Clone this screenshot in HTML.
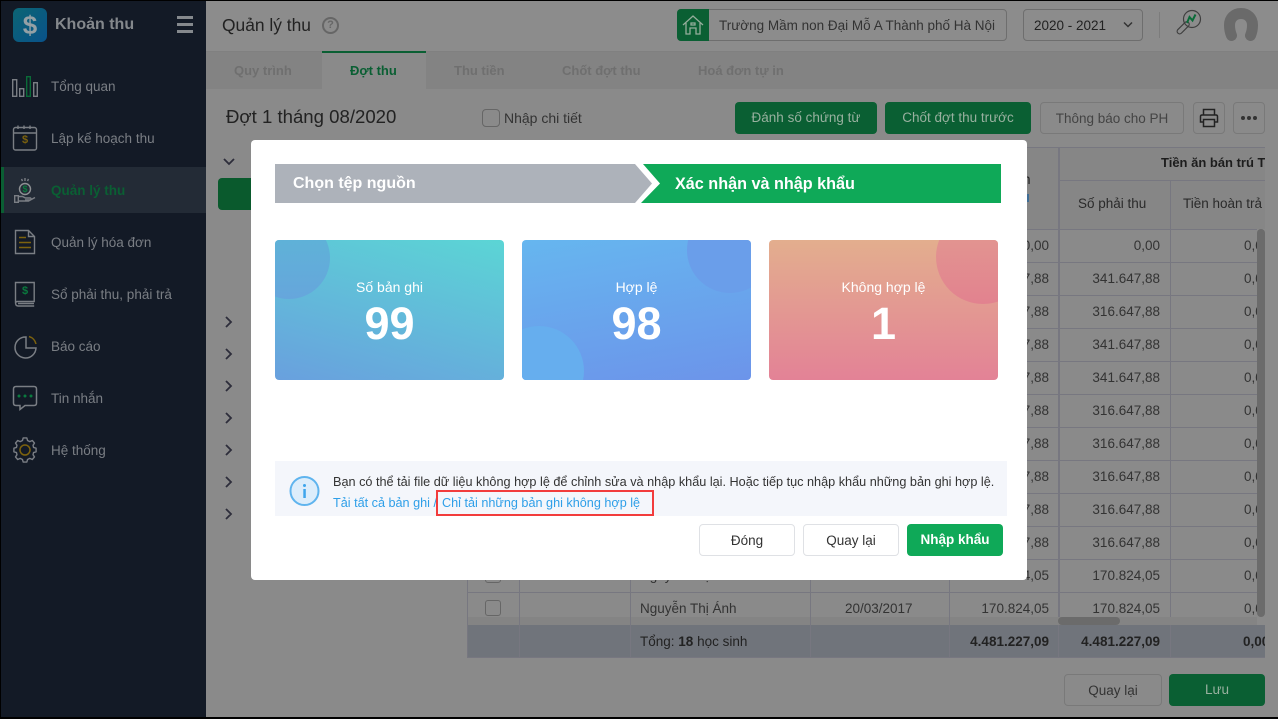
<!DOCTYPE html>
<html lang="vi"><head><meta charset="utf-8"><title>Khoản thu</title>
<style>
*{box-sizing:border-box}
html,body{margin:0;padding:0}
body{width:1278px;height:719px;overflow:hidden;position:relative;background:#8a8a8a;font-family:"Liberation Sans","DejaVu Sans",sans-serif;font-size:13.5px;color:#2a2a2a}
.a{position:absolute}
.t{position:absolute;white-space:nowrap;line-height:20px}
.nav{color:#7a7e84;font-size:13.5px;left:51px}
.tab{color:#6f6f6f;font-weight:bold;font-size:13px;top:61px}
.cell{color:#333;width:100px;text-align:right}
.z{left:1244px;width:13px;overflow:hidden;color:#333}
.hl{position:absolute;background:#777780;height:1px}
.vl{position:absolute;background:#777780;width:1px}
.btn{position:absolute;border-radius:4px;text-align:center;line-height:32px;white-space:nowrap}
.bd{line-height:31px}
.card{position:absolute;top:240px;width:229px;height:140px;border-radius:4px;overflow:hidden;color:#fff;text-align:center}
.card i{position:absolute;border-radius:50%;display:block}
.card b{position:absolute;left:0;right:0;top:57px;font-size:45px;line-height:54px}
.card span{position:absolute;left:0;right:0;top:37px;font-size:14px;line-height:20px}
</style></head><body>

<!-- sidebar -->
<div class="a" style="left:0;top:0;width:206px;height:719px;background:#131a26;border-left:1px solid #000"></div>
<div class="a" style="left:13px;top:8px;width:34px;height:34px;border-radius:6px;background:linear-gradient(135deg,#0c6573,#09528a)"></div>
<div class="t" style="left:13px;top:8px;width:34px;line-height:34px;text-align:center;font-size:26px;color:#94a0a5;font-weight:bold">$</div>
<div class="t" style="left:55px;top:15px;font-size:16px;font-weight:bold;color:#84888c">Khoản thu</div>
<div class="a" style="left:177px;top:16px;width:16px;height:2.5px;background:#85898d"></div>
<div class="a" style="left:177px;top:23px;width:16px;height:2.5px;background:#85898d"></div>
<div class="a" style="left:177px;top:30px;width:16px;height:2.5px;background:#85898d"></div>
<div class="a" style="left:1px;top:167px;width:205px;height:46px;background:#232b36;border-left:3px solid #0a5f33"></div>

<svg class="a" style="left:0;top:60px" width="206" height="420" fill="none" stroke="#7a7e84" stroke-width="1.400">
<!-- tong quan -->
<rect x="12.700" y="19.700" width="4" height="16.600"/><rect x="19.700" y="28.700" width="4" height="7.600"/><rect x="26.700" y="16.700" width="3.600" height="19.600" stroke="#0a6b38"/><rect x="33.700" y="22.700" width="3.600" height="13.600"/>
<!-- ke hoach -->
<rect x="13.500" y="67.500" width="23" height="22.500" rx="2"/>
<path d="M13 73h24M18 65.500v3.500M24 65.500v3.500M30 65.500v3.500"/>
<!-- hand -->
<circle cx="25" cy="129" r="5.500" stroke="#8d9093"/><path d="M25 118v3M21.500 119l1 2M28.500 119l-1 2"/>
<rect x="14.700" y="135.700" width="3.600" height="6.600"/><path d="M18.500 136.500h4l3 1.500h5q1.500 1-.5 2h-5M18.500 141h10l6.500-3.500"/>
<!-- hoa don -->
<path d="M15.500 170.500h13l6 6v17h-19zM28.500 170.500v6h6"/>
<path d="M19 177.500h7M19 182.500h12M19 187.500h12" stroke="#7c620e" stroke-width="1.600"/>
<!-- so -->
<path d="M15.700 222.500h18.500v19H17.500q-2 0-2 2v-21zM15.700 243.500q0 2.500 2.500 2.500h16M18 243.500h16"/>
<!-- bao cao -->
<path d="M26 277a10.500 10.500 0 1 0 10 11h-10z" stroke-width="1.500"/>
<path d="M29 276.500a10 10 0 0 1 7 7.500" stroke="#7c620e" stroke-width="1.500"/>
<!-- tin nhan -->
<path d="M16 326.500h18q2.500 0 2.500 2.500v14q0 2.500-2.500 2.500H25l-5 4v-4h-4q-2.500 0-2.500-2.500v-14q0-2.500 2.500-2.500z" stroke-width="1.500"/>
<!-- he thong -->
<path d="M22 378.500h5l1 3.500 3 1.500 3.500-1.500 3 3.500-2 3 .7 3 3.500 1v5l-3.500 1-.7 3 2 3-3 3.500-3.500-1.500-3 1.500-1 3.500h-5l-1-3.500-3-1.500-3.500 1.500-3-3.500 2-3-.7-3-3.500-1v-5l3.500-1 .7-3-2-3 3-3.500 3.500 1.500 3-1.500z" stroke-width="1.900" stroke-linejoin="round" transform="translate(25 390) scale(.73) translate(-24.500 -395)"/>
<circle cx="25" cy="390" r="5" stroke="#7c620e" stroke-width="1.500"/>
<circle cx="19" cy="336" r="1.500" fill="#0a7a3e" stroke="none"/><circle cx="25" cy="336" r="1.500" fill="#0a7a3e" stroke="none"/><circle cx="31" cy="336" r="1.500" fill="#0a7a3e" stroke="none"/>
</svg>
<div class="t" style="left:15px;top:130px;width:20px;text-align:center;font-size:11px;font-weight:bold;color:#7c620e">$</div>
<div class="t" style="left:15px;top:281px;width:20px;text-align:center;font-size:11px;font-weight:bold;color:#0a7a3e">$</div>
<div class="t" style="left:15px;top:179px;width:20px;text-align:center;font-size:9px;font-weight:bold;color:#0a7a3e">$</div>

<div class="t nav" style="top:77px">Tổng quan</div>
<div class="t nav" style="top:129px">Lập kế hoạch thu</div>
<div class="t nav" style="top:181px;color:#0a5f33;font-weight:bold">Quản lý thu</div>
<div class="t nav" style="top:233px">Quản lý hóa đơn</div>
<div class="t nav" style="top:285px">Sổ phải thu, phải trả</div>
<div class="t nav" style="top:337px">Báo cáo</div>
<div class="t nav" style="top:389px">Tin nhắn</div>
<div class="t nav" style="top:441px">Hệ thống</div>

<!-- header -->
<div class="a" style="left:206px;top:0;width:1072px;height:52px;background:#8c8c8c;border-bottom:1px solid #808080"></div>
<div class="a" style="left:0;top:0;width:1278px;height:1px;background:#000"></div>
<div class="t" style="left:222px;top:15px;font-size:17.400px;color:#222">Quản lý thu</div>
<div class="a" style="left:322px;top:17px;width:17px;height:17px;border:2px solid #666;border-radius:50%;color:#666;font-size:11px;font-weight:bold;text-align:center;line-height:13px">?</div>

<div class="a" style="left:677px;top:9px;width:330px;height:32px;border:1px solid #6e6e6e;border-radius:4px"></div>
<div class="a" style="left:677px;top:9px;width:32px;height:32px;background:#0a5f33;border-radius:4px 0 0 4px"></div>
<svg class="a" style="left:681px;top:14px" width="24" height="22" fill="none" stroke="#94ad9b" stroke-width="1.300"><path d="M2 11 12 2l10 9M5 9v11h4v-6h6v6h4V9M10 9h4v2h-4z"/></svg>
<div class="t" style="left:719px;top:16px;font-size:13.500px;color:#333">Trường Mầm non Đại Mỗ A Thành phố Hà Nội</div>
<div class="a" style="left:1023px;top:9px;width:120px;height:32px;border:1px solid #6e6e6e;border-radius:4px"></div>
<div class="t" style="left:1034px;top:16px;font-size:13.500px;color:#222">2020 - 2021</div>
<svg class="a" style="left:1122px;top:21px" width="12" height="8" fill="none" stroke="#333" stroke-width="1.500"><path d="M2 1.500 6 5.500 10 1.500"/></svg>
<div class="a" style="left:1159px;top:12px;width:1px;height:26px;background:#7c7c7c"></div>
<svg class="a" style="left:1172px;top:8px" width="30" height="30" fill="none" stroke="#3f3f3f" stroke-width="1.200"><circle cx="20" cy="11" r="8.500"/><rect x="-3" y="-2.500" width="15" height="5" rx="2.500" transform="translate(8 23) rotate(-45)"/><path d="M15 15l2.500-6 3 3.500 3-6" stroke="#0a6b38" stroke-width="2"/></svg>
<svg class="a" style="left:1223px;top:8px" width="36" height="36" fill="none" stroke="#6a6a6a" stroke-width="11" stroke-linecap="round"><path d="M8.500 27.500C7 24 6.500 21 6.500 17 6.500 10 11.500 5.500 18 5.500S29.500 10 29.500 17C29.500 21 29 24 27.500 27.500"/></svg>

<!-- tabs -->
<div class="a" style="left:206px;top:52px;width:1072px;height:37px;background:#838383"></div>
<div class="a" style="left:322px;top:51px;width:104px;height:38px;background:#8a8a8a;border-top:2px solid #0a5f33"></div>
<div class="t tab" style="left:234px">Quy trình</div>
<div class="t tab" style="left:350px;color:#0a5f33">Đợt thu</div>
<div class="t tab" style="left:454px">Thu tiền</div>
<div class="t tab" style="left:562px">Chốt đợt thu</div>
<div class="t tab" style="left:698px">Hoá đơn tự in</div>

<!-- sub header -->
<div class="t" style="left:226px;top:107px;font-size:18.600px;color:#222">Đợt 1 tháng 08/2020</div>
<div class="a" style="left:482px;top:109px;width:18px;height:18px;border:1px solid #666;border-radius:4px"></div>
<div class="t" style="left:504px;top:108px;font-size:14px;color:#333">Nhập chi tiết</div>
<div class="btn" style="left:735px;top:102px;width:142px;height:32px;background:#0a5f33;color:#98b09f">Đánh số chứng từ</div>
<div class="btn" style="left:885px;top:102px;width:146px;height:32px;background:#0a5f33;color:#98b09f">Chốt đợt thu trước</div>
<div class="btn bd" style="left:1040px;top:102px;width:144px;height:32px;border:1px solid #797979;color:#444">Thông báo cho PH</div>
<div class="a" style="left:1193px;top:102px;width:32px;height:32px;border:1px solid #797979;border-radius:4px"></div>
<svg class="a" style="left:1199px;top:108px" width="20" height="20" fill="none" stroke="#222" stroke-width="1.500"><path d="M4.500 7V1.500h11V7M4.500 14H1.500V8.500q0-1.500 1.500-1.500h14q1.500 0 1.500 1.500V14h-3"/><rect x="4.500" y="11.500" width="11" height="7"/></svg>
<div class="a" style="left:1233px;top:102px;width:32px;height:32px;border:1px solid #797979;border-radius:4px"></div>
<div class="a" style="left:1241px;top:116px;width:4px;height:4px;background:#333;border-radius:50%"></div>
<div class="a" style="left:1247px;top:116px;width:4px;height:4px;background:#333;border-radius:50%"></div>
<div class="a" style="left:1253px;top:116px;width:4px;height:4px;background:#333;border-radius:50%"></div>

<!-- tree -->
<div class="a" style="left:218px;top:178px;width:40px;height:32px;background:#0a5a2d;border-radius:4px"></div>
<svg class="a" style="left:222px;top:155px" width="14" height="370" fill="none" stroke="#2d2d3a" stroke-width="1.800">
<path d="M2 4l5 5 5-5"/>
<path d="M4 162l5 5-5 5M4 194l5 5-5 5M4 226l5 5-5 5M4 258l5 5-5 5M4 290l5 5-5 5M4 322l5 5-5 5M4 354l5 5-5 5"/>
</svg>

<!-- table -->
<div class="a" style="left:467px;top:147px;width:798px;height:82px;background:#868686"></div>
<div class="a" style="left:467px;top:625px;width:798px;height:32px;background:#70747b"></div>
<div class="a" style="left:467px;top:617px;width:790px;height:8px;background:#848484"></div>
<div class="a" style="left:1058px;top:617px;width:62px;height:8px;background:#6b6b6b;border-radius:4px"></div>

<div class="hl" style="left:467px;top:147px;width:798px"></div>
<div class="hl" style="left:1058px;top:180px;width:207px"></div>
<div class="hl" style="left:467px;top:229px;width:790px"></div>
<div class="hl" style="left:467px;top:262px;width:790px"></div>
<div class="hl" style="left:467px;top:295px;width:790px"></div>
<div class="hl" style="left:467px;top:328px;width:790px"></div>
<div class="hl" style="left:467px;top:361px;width:790px"></div>
<div class="hl" style="left:467px;top:394px;width:790px"></div>
<div class="hl" style="left:467px;top:427px;width:790px"></div>
<div class="hl" style="left:467px;top:460px;width:790px"></div>
<div class="hl" style="left:467px;top:493px;width:790px"></div>
<div class="hl" style="left:467px;top:526px;width:790px"></div>
<div class="hl" style="left:467px;top:559px;width:790px"></div>
<div class="hl" style="left:467px;top:592px;width:790px"></div>
<div class="hl" style="left:467px;top:657px;width:798px"></div>
<div class="vl" style="left:467px;top:559px;height:98px"></div>
<div class="vl" style="left:519px;top:559px;height:98px"></div>
<div class="vl" style="left:630px;top:559px;height:98px"></div>
<div class="vl" style="left:810px;top:559px;height:98px"></div>
<div class="vl" style="left:949px;top:559px;height:98px"></div>
<div class="vl" style="left:1058px;top:147px;height:470px;width:2px"></div>
<div class="vl" style="left:1170px;top:180px;height:437px"></div>
<div class="vl" style="left:1058px;top:625px;height:32px"></div>
<div class="vl" style="left:1170px;top:625px;height:32px"></div>
<div class="a" style="left:1265px;top:147px;width:13px;height:520px;background:#8a8a8a"></div>

<div class="t" style="left:1161px;top:153px;width:104px;overflow:hidden;font-size:13px;font-weight:bold;color:#1d1d1d">Tiền ăn bán trú Tháng</div>
<div class="t" style="left:1078px;top:194px;color:#2a2a2a">Số phải thu</div>
<div class="t" style="left:1183px;top:194px;width:82px;overflow:hidden;color:#2a2a2a">Tiền hoàn trả</div>
<div class="t" style="left:1023px;top:170px;color:#222">n</div>
<div class="a" style="left:1027px;top:194px;width:2px;height:8px;background:#3f6d95"></div>

<div class="t cell" style="left:949px;top:236px">0,00</div><div class="t cell" style="left:1060px;top:236px">0,00</div><div class="t z" style="top:236px">0,00</div>
<div class="t cell" style="left:949px;top:269px">341.647,88</div><div class="t cell" style="left:1060px;top:269px">341.647,88</div><div class="t z" style="top:269px">0,00</div>
<div class="t cell" style="left:949px;top:302px">316.647,88</div><div class="t cell" style="left:1060px;top:302px">316.647,88</div><div class="t z" style="top:302px">0,00</div>
<div class="t cell" style="left:949px;top:335px">341.647,88</div><div class="t cell" style="left:1060px;top:335px">341.647,88</div><div class="t z" style="top:335px">0,00</div>
<div class="t cell" style="left:949px;top:368px">341.647,88</div><div class="t cell" style="left:1060px;top:368px">341.647,88</div><div class="t z" style="top:368px">0,00</div>
<div class="t cell" style="left:949px;top:401px">316.647,88</div><div class="t cell" style="left:1060px;top:401px">316.647,88</div><div class="t z" style="top:401px">0,00</div>
<div class="t cell" style="left:949px;top:434px">316.647,88</div><div class="t cell" style="left:1060px;top:434px">316.647,88</div><div class="t z" style="top:434px">0,00</div>
<div class="t cell" style="left:949px;top:467px">316.647,88</div><div class="t cell" style="left:1060px;top:467px">316.647,88</div><div class="t z" style="top:467px">0,00</div>
<div class="t cell" style="left:949px;top:500px">316.647,88</div><div class="t cell" style="left:1060px;top:500px">316.647,88</div><div class="t z" style="top:500px">0,00</div>
<div class="t cell" style="left:949px;top:533px">316.647,88</div><div class="t cell" style="left:1060px;top:533px">316.647,88</div><div class="t z" style="top:533px">0,00</div>
<div class="t cell" style="left:949px;top:566px">170.824,05</div><div class="t cell" style="left:1060px;top:566px">170.824,05</div><div class="t z" style="top:566px">0,00</div>
<div class="t cell" style="left:949px;top:599px">170.824,05</div><div class="t cell" style="left:1060px;top:599px">170.824,05</div><div class="t z" style="top:599px">0,00</div>
<div class="a" style="left:1257px;top:229px;width:8px;height:388px;background:#6b6b6b;border-radius:4px"></div>

<div class="a" style="left:485px;top:567px;width:16px;height:16px;border:1px solid #666;border-radius:3px"></div>
<div class="a" style="left:485px;top:600px;width:16px;height:16px;border:1px solid #666;border-radius:3px"></div>
<div class="t" style="left:640px;top:566px;color:#333">Nguyễn Thị Ánh</div>
<div class="t" style="left:640px;top:599px;color:#333">Nguyễn Thị Ánh</div>
<div class="t" style="left:845px;top:599px;color:#333">20/03/2017</div>
<div class="t" style="left:640px;top:632px;color:#222">Tổng: <b>18</b> học sinh</div>
<div class="t cell" style="left:949px;top:632px;font-weight:bold;color:#222">4.481.227,09</div>
<div class="t cell" style="left:1060px;top:632px;font-weight:bold;color:#222">4.481.227,09</div>
<div class="t" style="left:1243px;top:632px;width:22px;overflow:hidden;font-weight:bold;color:#222">0,00</div>

<div class="btn bd" style="left:1064px;top:674px;width:98px;height:32px;border:1px solid #797979;color:#333">Quay lại</div>
<div class="btn" style="left:1169px;top:674px;width:96px;height:32px;background:#0a5f33;color:#98b09f">Lưu</div>

<!-- modal -->
<div class="a" style="left:251px;top:140px;width:776px;height:440px;background:#fff;border-radius:4px"></div>
<svg class="a" style="left:275px;top:164px" width="730" height="39"><polygon points="0,0 360,0 377,19.500 360,39 0,39" fill="#adb2ba"/><polygon points="368,0 726,0 726,39 366,39 385,19.500" fill="#0fa958"/></svg>
<div class="t" style="left:293px;top:174px;font-size:16px;font-weight:bold;color:#fff">Chọn tệp nguồn</div>
<div class="t" style="left:675px;top:174px;font-size:16.200px;font-weight:bold;color:#fff">Xác nhận và nhập khẩu</div>

<div class="card" style="left:275px;background:linear-gradient(195deg,#5bd5d5,#69a0de)">
<i style="left:-27px;top:-23px;width:82px;height:82px;background:linear-gradient(180deg,#5cb6d6,#66a6dc)"></i>
<span>Số bản ghi</span><b>99</b></div>
<div class="card" style="left:522px;background:linear-gradient(170deg,#66b6ef,#6c94ea)">
<i style="left:165px;top:-33px;width:86px;height:86px;background:#6a9eea"></i>
<i style="left:-28px;top:86px;width:90px;height:90px;background:#66aeee"></i>
<span>Hợp lệ</span><b>98</b></div>
<div class="card" style="left:769px;background:linear-gradient(180deg,#e3ae8e,#e38296)">
<i style="left:167px;top:-30px;width:94px;height:94px;background:linear-gradient(180deg,#e29c90,#e2828f)"></i>
<span>Không hợp lệ</span><b>1</b></div>

<div class="a" style="left:275px;top:461px;width:732px;height:55px;background:#f4f6fb"></div>
<svg class="a" style="left:289px;top:475px" width="32" height="32"><circle cx="15.500" cy="16" r="14" fill="#dcedfb" stroke="#5fb4ee" stroke-width="2"/><circle cx="15.500" cy="10.500" r="1.500" fill="#3ea5ec"/><rect x="14.300" y="14" width="2.500" height="9" fill="#3ea5ec"/></svg>
<div class="t" style="left:333px;top:472px;font-size:12.680px;color:#333">Bạn có thể tải file dữ liệu không hợp lệ để chỉnh sửa và nhập khẩu lại. Hoặc tiếp tục nhập khẩu những bản ghi hợp lệ.</div>
<div class="t" style="left:333px;top:493px;font-size:12.650px;color:#2f9fe8">Tải tất cả bản ghi /</div>
<div class="t" style="left:442px;top:493px;font-size:12.650px;color:#2f9fe8">Chỉ tải những bản ghi không hợp lệ</div>
<div class="a" style="left:436px;top:490px;width:218px;height:26px;border:2px solid #f23c3c"></div>

<div class="btn bd" style="left:699px;top:524px;width:96px;height:32px;border:1px solid #dfe1e5;color:#333;background:#fff">Đóng</div>
<div class="btn bd" style="left:803px;top:524px;width:96px;height:32px;border:1px solid #dfe1e5;color:#333;background:#fff">Quay lại</div>
<div class="btn" style="left:907px;top:524px;width:96px;height:32px;background:#0fa958;color:#fff;font-weight:bold">Nhập khẩu</div>

<div class="a" style="left:0;top:717px;width:1278px;height:2px;background:#000"></div>
</body></html>
